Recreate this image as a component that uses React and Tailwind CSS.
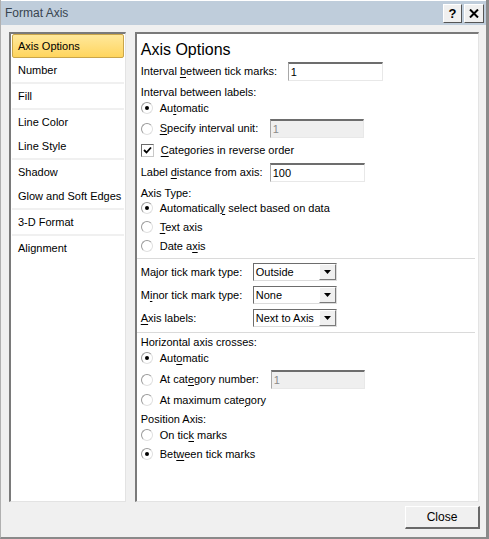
import React from 'react';

const U = ({ children }) => <span className="underline underline-offset-2">{children}</span>;

const Radio = ({ checked }) => (
  <span className="w-[12px] h-[12px] rounded-full border border-t-[#9a9a9a] border-l-[#9a9a9a] border-r-[#e0e0e0] border-b-[#e0e0e0] bg-white flex items-center justify-center shrink-0">
    {checked && <span className="w-[4px] h-[4px] rounded-full bg-black"></span>}
  </span>
);

const Check = () => (
  <span className="w-[13px] h-[13px] border border-t-[#6b6b6b] border-l-[#6b6b6b] border-r-[#c8c8c8] border-b-[#c8c8c8] bg-white flex items-center justify-center shrink-0">
    <svg width="9" height="9" viewBox="0 0 9 9">
      <path d="M1 4 L3.5 6.5 L8 1.5" stroke="#000" strokeWidth="1.8" fill="none" />
    </svg>
  </span>
);

const TextBox = ({ value, disabled, width }) => (
  <div className={`${width} h-[19px] border-t-2 border-l border-t-[#6d6d6d] border-l-[#a8a8a8] border-r border-b border-r-[#e8e8e8] border-b-[#e8e8e8] ${disabled ? 'bg-[#efefef] text-[#8a8a8a]' : 'bg-white text-black'} pl-[2px] leading-[16px]`}>
    {value}
  </div>
);

const Select = ({ value }) => (
  <div className="w-[84px] h-[18px] flex border-t border-l border-[#6d6d6d] border-r border-b border-r-[#dcdcdc] border-b-[#dcdcdc] bg-white">
    <div className="flex-1 pl-[2px] leading-[16px] overflow-hidden whitespace-nowrap">{value}</div>
    <div className="w-[17px] h-[16px] bg-[#f0f0f0] border-t border-l border-white border-r border-b border-r-[#7a7a7a] border-b-[#7a7a7a] flex items-center justify-center">
      <svg width="7" height="4" viewBox="0 0 7 4"><path d="M0 0 H7 L3.5 4 Z" fill="#000" /></svg>
    </div>
  </div>
);

const RadioRow = ({ checked, children, className = '' }) => (
  <div className={`flex items-center gap-[7px] h-[16px] ${className}`}>
    <Radio checked={checked} />
    <span>{children}</span>
  </div>
);

const Sep = () => <div className="h-[2px] bg-[#f0f0f0] mx-[1px]"></div>;

const NavItem = ({ label, active }) => (
  active ? (
    <div className="h-[24px] mx-[1px] rounded-[2px] border border-[#c9a54a] bg-gradient-to-b from-[#ffe89a] to-[#ffd55c] pl-[5px] leading-[22px]">{label}</div>
  ) : (
    <div className="h-[24px] pl-[7px] leading-[24px]">{label}</div>
  )
);

export default function App() {
  return (
    <div className="w-[489px] h-[539px] flex flex-col bg-[#f0f0f0] border-l border-r-[3px] border-b-[2px] border-[#8a8a8a] border-l-[#b0b0b0] text-[11px] text-black overflow-hidden" style={{ fontFamily: '"Liberation Sans", Arial, sans-serif' }}>
      <div className="h-[25px] shrink-0 bg-[#bfcddb] border-t border-white flex items-center pl-[4px] pr-[2px]">
        <span className="text-[12px] text-[#38444f] flex-1">Format Axis</span>
        <div className="flex gap-[2px] mt-[1px]">
          <div className="w-[19px] h-[19px] bg-[#f0f0f0] border-t border-l border-white border-r border-b border-r-[#555] border-b-[#555] flex items-center justify-center font-bold text-[13px] leading-none">?</div>
          <div className="w-[20px] h-[19px] bg-[#f0f0f0] border-t border-l border-white border-r border-b border-r-[#555] border-b-[#555] flex items-center justify-center">
            <svg width="10" height="9" viewBox="0 0 10 9"><path d="M1 0.5 L9 8.5 M9 0.5 L1 8.5" stroke="#000" strokeWidth="2" /></svg>
          </div>
        </div>
      </div>

      <div className="flex flex-1 pt-[7px] pl-[8px] pr-[7px] gap-[9px]">
        <div className="w-[117px] h-[470px] bg-white border-t-2 border-l-2 border-[#7a7a7a] border-r border-b border-r-[#e3e3e3] border-b-[#e3e3e3]">
          <NavItem label="Axis Options" active />
          <NavItem label="Number" />
          <Sep />
          <NavItem label="Fill" />
          <Sep />
          <NavItem label="Line Color" />
          <NavItem label="Line Style" />
          <Sep />
          <NavItem label="Shadow" />
          <NavItem label="Glow and Soft Edges" />
          <Sep />
          <NavItem label="3-D Format" />
          <Sep />
          <NavItem label="Alignment" />
        </div>

        <div className="w-[345px] h-[470px] bg-white border-t-2 border-l-2 border-[#7a7a7a] border-r border-b border-r-[#e3e3e3] border-b-[#e3e3e3] pl-[4px] pt-[5px]">
          <div className="text-[16px] h-[23px] leading-[22px]">Axis Options</div>
          <div className="flex items-center h-[19px]">
            <span className="w-[147px]">Interval <U>b</U>etween tick marks:</span>
            <TextBox value="1" width="w-[95px]" />
          </div>
          <div className="h-[16px] leading-[16px] mt-[3px]">Interval between labels:</div>
          <RadioRow checked>Au<U>t</U>omatic</RadioRow>
          <div className="flex items-center h-[19px] mt-[3px]">
            <Radio />
            <span className="ml-[7px] w-[110px]"><U>S</U>pecify interval unit:</span>
            <TextBox value="1" disabled width="w-[94px]" />
          </div>
          <div className="flex items-center gap-[7px] h-[16px] mt-[4px]">
            <Check />
            <span><U>C</U>ategories in reverse order</span>
          </div>
          <div className="flex items-center h-[19px] mt-[5px]">
            <span className="w-[129px]">Label <U>d</U>istance from axis:</span>
            <TextBox value="100" width="w-[95px]" />
          </div>
          <div className="h-[16px] leading-[16px] mt-[3px]">Axis Type:</div>
          <RadioRow checked className="-mt-[1px]">Automaticall<U>y</U> select based on data</RadioRow>
          <RadioRow className="mt-[3px]"><U>T</U>ext axis</RadioRow>
          <RadioRow className="mt-[3px]">Date a<U>x</U>is</RadioRow>
          <div className="h-px bg-[#dadada] mt-[4px] mr-[3px] -ml-[4px]"></div>
          <div className="flex items-center h-[18px] mt-[4px]">
            <span className="w-[112px]">Major tick mark type:</span>
            <Select value="Outside" />
          </div>
          <div className="flex items-center h-[18px] mt-[5px]">
            <span className="w-[112px]">M<U>i</U>nor tick mark type:</span>
            <Select value="None" />
          </div>
          <div className="flex items-center h-[18px] mt-[5px]">
            <span className="w-[112px]"><U>A</U>xis labels:</span>
            <Select value="Next to Axis" />
          </div>
          <div className="h-px bg-[#dadada] mt-[5px] mr-[3px] -ml-[4px]"></div>
          <div className="h-[16px] leading-[16px] mt-[1px]">Horizontal axis crosses:</div>
          <RadioRow checked>Aut<U>o</U>matic</RadioRow>
          <div className="flex items-center h-[19px] mt-[4px]">
            <Radio />
            <span className="ml-[7px] w-[111px]">At cat<U>e</U>gory number:</span>
            <TextBox value="1" disabled width="w-[94px]" />
          </div>
          <RadioRow className="mt-[3px]">At maximum cate<U>g</U>ory</RadioRow>
          <div className="h-[16px] leading-[16px] mt-[3px]">Position Axis:</div>
          <RadioRow>On tic<U>k</U> marks</RadioRow>
          <RadioRow checked className="mt-[3px]">Bet<U>w</U>een tick marks</RadioRow>
        </div>
      </div>

      <div className="h-[35px] shrink-0 flex justify-end items-start pr-[6px] pt-[4px]">
        <div className="w-[75px] h-[23px] bg-[#f0f0f0] border-t border-l border-white border-r-2 border-b-2 border-r-[#696969] border-b-[#696969] flex items-center justify-center text-[12px]">Close</div>
      </div>
    </div>
  );
}
